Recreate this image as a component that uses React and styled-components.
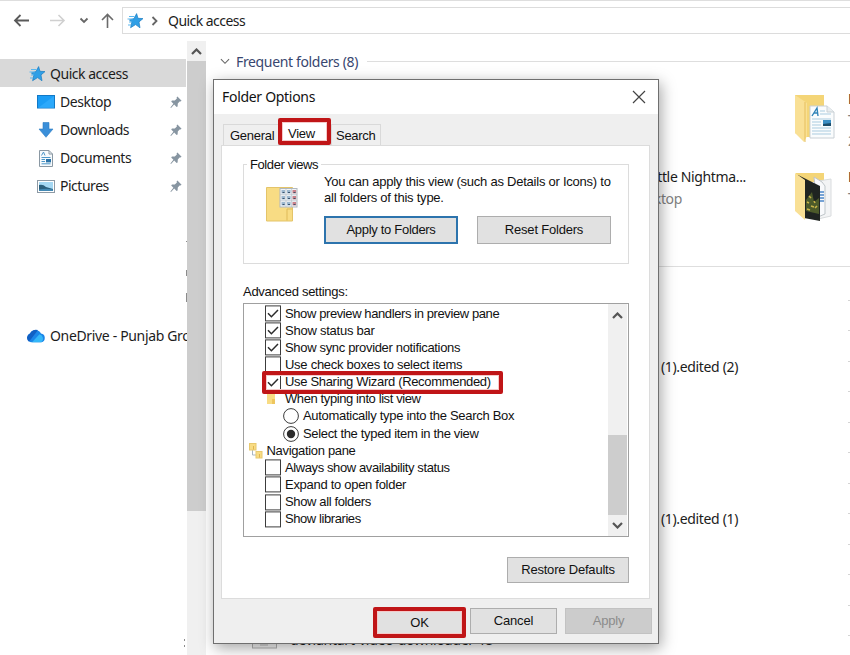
import React from 'react';
import styled, { createGlobalStyle, css } from 'styled-components';

const GlobalStyle = createGlobalStyle`
  * { box-sizing: border-box; }
  body { margin: 0; background: #fff; overflow: hidden; }
  svg { display: block; flex: none; }
`;

const Explorer = styled.div`
  position: relative;
  width: 850px;
  height: 655px;
  overflow: hidden;
  display: flex;
  flex-direction: column;
  background: #fff;
  color: #1c1c1c;
  font: 14px/20px "Noto Sans", "Open Sans", sans-serif;
  letter-spacing: -0.35px;
  white-space: nowrap;
`;

const NavBar = styled.header`
  display: flex;
  height: 41px;
  border-top: 1px solid #dedede;
  padding-top: 6px;
  flex: none;
`;

const NavButtons = styled.div`
  width: 122px;
  height: 27px;
`;

const AddressBar = styled.div`
  flex: 1;
  height: 27px;
  border: 1px solid #dcdcdc;
  border-right: 0;
  display: flex;
  align-items: center;
  padding-left: 4px;
`;

const Crumb = styled.span`
  margin-left: 6px;
  letter-spacing: -0.55px;
`;

const Body = styled.div`
  display: flex;
  flex: 1;
  min-height: 0;
`;

const Sidebar = styled.nav`
  width: 187px;
  padding-top: 18px;
  overflow: hidden;
  flex: none;
  display: flex;
  flex-direction: column;
`;

const SideItem = styled.div`
  display: flex;
  align-items: center;
  flex: none;
  height: 28px;
  width: 186px;
  padding: 2px 4px 0 ${(p) => p.$indent}px;
  background: ${(p) => (p.$active ? '#d9d9d9' : 'transparent')};
  letter-spacing: ${(p) => p.$track ?? -0.48}px;
`;

const SideIcon = styled.span`
  display: flex;
  width: ${(p) => p.$w}px;
  flex: none;
`;

const SideText = styled.span`
  flex: 1;
`;

const SideGap = styled.div`
  height: ${(p) => p.$h}px;
  flex: none;
  display: flex;
  flex-direction: column;
  align-items: flex-end;
`;

const Sliver = styled.i`
  width: 1px;
  height: ${(p) => p.$h}px;
  margin: ${(p) => p.$top}px ${(p) => p.$right || 0}px 0 0;
  background: #8c8c8c;
`;

const Track = styled.div`
  width: 19px;
  flex: none;
  display: flex;
  flex-direction: column;
  background: #f0f0f0;
`;

const ArrowCell = styled.div`
  height: ${(p) => p.$h}px;
  display: flex;
  align-items: center;
  justify-content: center;
`;

const Thumb = styled.div`
  height: ${(p) => p.$h}px;
  margin-top: ${(p) => p.$top || 0}px;
  background: #cdcdcd;
`;

const Content = styled.main`
  flex: 1;
  min-width: 0;
  overflow: hidden;
  padding-left: 14px;
`;

const GroupHeader = styled.div`
  display: flex;
  align-items: center;
  height: 41px;
  color: #38466f;
`;

const HeaderText = styled.span`
  margin: 0 9px 0 6px;
`;

const Rule = styled.div`
  flex: 1;
  height: 1px;
  background: #dedede;
`;

const Tiles = styled.div`
  margin-top: -2px;
`;

const TileRow = styled.div`
  display: flex;
  height: 78px;
  align-items: center;
`;

const TileText = styled.div`
  width: 526px;
  flex: none;
  text-align: right;
  margin: 0 48px 18px 0;
  line-height: 22px;
`;

const Sub = styled.div`
  color: #808080;
  padding-right: ${(p) => p.$pad || 0}px;
`;

const EdgeText = styled.div`
  margin: 0 0 ${(p) => p.$lift}px 11px;
  line-height: 21px;
`;

const OffsetRows = styled.div`
  padding-top: 24px;
`;

const FileRow = styled.div`
  display: flex;
  align-items: center;
  height: 152px;
`;

const FileName = styled.div`
  width: 518px;
  text-align: right;
`;

const RecentRule = styled.div`
  height: 1px;
  background: #dedede;
  margin-top: 30px;
`;

const LastFile = styled.div`
  display: flex;
  align-items: center;
  gap: 13px;
  padding-left: 32px;
  margin-top: 35px;
  height: 20px;
`;

const LastName = styled.span`
  letter-spacing: -0.25px;
`;

const EdgeMarks = styled.div`
  position: absolute;
  right: 0;
  top: 300px;
  width: 2px;
  display: flex;
  flex-direction: column;
  justify-content: space-between;
  height: 336px;
`;

const Mark = styled.i`
  height: 1px;
  background: #d4d4d4;
`;

const Dialog = styled.section`
  position: absolute;
  left: 213px;
  top: 79px;
  width: 446px;
  height: 565px;
  background: #efefef;
  border: 1px solid #6f6f6f;
  box-shadow: 2px 4px 14px rgba(0, 0, 0, 0.36);
  color: #111;
  font: 13px/16px "Liberation Sans", Arial, sans-serif;
  letter-spacing: -0.28px;
`;

const TitleBar = styled.div`
  height: 34px;
  background: #fff;
  display: flex;
  align-items: center;
  justify-content: space-between;
  padding: 0 12px 0 8px;
  font: 14px/20px "Noto Sans", "Open Sans", sans-serif;
  letter-spacing: -0.3px;
`;

const Tabs = styled.div`
  display: flex;
  align-items: flex-end;
  height: 31px;
  padding-left: 9px;
`;

const Tab = styled.div`
  width: ${(p) => p.$w}px;
  height: 21px;
  border: 1px solid #d9d9d9;
  border-bottom: 0;
  padding: 3px 0 0 ${(p) => p.$pad}px;
`;

const redFrame = css`
  border: 4px solid #c01517;
  border-radius: 2px;
  box-shadow: inset 0 0 0 1px #f5c9c9;
`;

const ActiveTab = styled.div`
  ${redFrame}
  width: 53px;
  height: 27px;
  background: #fff;
  padding: 4px 0 0 6px;
  line-height: 15px;
  margin-left: -1px;
  z-index: 1;
`;

const Panel = styled.div`
  margin: 0 8px 0 7px;
  height: 454px;
  background: #fff;
  border: 1px solid #dcdcdc;
  padding: 18px 20px 0 21px;
`;

const Group = styled.fieldset`
  position: relative;
  margin: 0;
  height: 100px;
  border: 1px solid #dcdcdc;
  padding: 0 0 0 22px;
  display: flex;
`;

const Legend = styled.span`
  position: absolute;
  left: 3px;
  top: -8px;
  background: #fff;
  padding: 0 3px;
  letter-spacing: -0.4px;
`;

const GroupIcon = styled.div`
  width: 58px;
  padding-top: 21px;
`;

const GroupBody = styled.div`
  padding-top: 9px;
`;

const Copy = styled.p`
  margin: 0 0 11px;
  line-height: 15.5px;
  letter-spacing: -0.24px;
`;

const Buttons = styled.div`
  display: flex;
  gap: ${(p) => p.$gap}px;
`;

const Button = styled.button`
  width: ${(p) => p.$w}px;
  height: ${(p) => p.$h}px;
  padding: 0;
  font: inherit;
  letter-spacing: ${(p) => p.$track ?? -0.2}px;
  color: #111;
  background: #e1e1e1;
  border: 1px solid #adadad;
  ${(p) => p.$focus && css`border: 2px solid #2d74ad;`}
  ${(p) => p.disabled && css`background: #cccccc; border-color: #c2c2c2; color: #8b8b8b;`}
  ${(p) => p.$marked && redFrame}
`;

const Caption = styled.div`
  margin: 20px 0 3px;
  line-height: 16px;
`;

const ListBox = styled.div`
  display: flex;
  justify-content: space-between;
  height: 234px;
  border: 1px solid #a0a0a0;
  padding-right: 1px;
`;

const Tree = styled.div`
  padding-top: 1px;
`;

const Row = styled.div`
  position: relative;
  display: flex;
  align-items: center;
  height: 17.15px;
  padding-left: ${(p) => p.$indent}px;
  letter-spacing: ${(p) => p.$track}px;
`;

const RowMark = styled.div`
  position: absolute;
  left: 18px;
  top: -2.6px;
  width: 241px;
  height: 23px;
  z-index: 1;
  ${redFrame}
`;

const RowIcon = styled.span`
  width: ${(p) => p.$w}px;
  flex: none;
`;

const PanelFoot = styled.div`
  display: flex;
  justify-content: flex-end;
  padding-top: 20px;
`;

const Footer = styled.footer`
  display: flex;
  justify-content: flex-end;
  padding: 9px 6px 0 0;
`;

const OkSlot = styled.div`
  margin: -1px 4px 0 0;
`;

const ApplySlot = styled.div`
  margin-left: 8px;
`;

const Star = () => (
  <svg width="17" height="16" viewBox="0 0 17 16">
    <path d="M9.6 0.6 L11 5.3 L16 5.6 L12 8.9 L13 14.8 L8.6 11.6 L3.6 14.7 L4.8 9.2 L2.4 7 L7 5.6Z" fill="#2f9fe6" stroke="#1b7dc2" strokeWidth=".7" />
    <path d="M2 3.500H7.500M0.500 6H6M2 9H5M1 12H4" stroke="#5ab7ef" strokeWidth="1" />
  </svg>
);

const Chevron = ({ dir, w = 11, h = 7, color = '#555', sw = 2.2 }) => (
  <svg width={w} height={h} viewBox="0 0 11 7">
    <path d={dir === 'up' ? 'M1 6 L5.5 1.5 L10 6' : 'M1 1 L5.5 5.5 L10 1'} fill="none" stroke={color} strokeWidth={sw} />
  </svg>
);

const Pin = () => (
  <svg width="12" height="13" viewBox="0 0 12 13">
    <path d="M7.4 0.6 L11.6 4.8 L10.4 5.6 L9.6 5.4 L7.8 7.6 L7.6 10.4 L6.6 11 L4.2 8.4 L1 12 L0.4 11.4 L3.4 7.8 L1.2 5.4 L2 4.6 L4.8 4.5 L6.9 2.5 L6.6 1.5Z" fill="#8795a1" />
  </svg>
);

const DesktopIcon = () => (
  <svg width="18" height="14" viewBox="0 0 18 14">
    <rect x=".5" y=".5" width="17" height="12.5" fill="#1b9df5" stroke="#1279c6" />
    <path d="M1 13 L17 1 V13Z" fill="#38b0ff" opacity=".6" />
  </svg>
);

const DownloadIcon = () => (
  <svg width="18" height="16" viewBox="0 0 18 16">
    <path d="M6 .5H12V7H16L9 15.3L2 7H6Z" fill="#3a8fd9" stroke="#2d7cc2" strokeWidth=".6" />
  </svg>
);

const DocIcon = () => (
  <svg width="18" height="17" viewBox="0 0 18 17">
    <path d="M2.5 .5H12L15.5 4V16.5H2.5Z" fill="#f7fafc" stroke="#8a98a3" />
    <path d="M12 .5V4H15.5" fill="none" stroke="#8a98a3" />
    <path d="M4.5 5.5L6.5 2L8 5.5M4.5 7.5H13.5M4.5 9.5H8M4.5 11.5H8M4.5 13.8H13.5" stroke="#4d97c9" fill="none" />
    <rect x="9" y="9" width="5" height="3.4" fill="#2a73a8" />
  </svg>
);

const PictureIcon = () => (
  <svg width="18" height="13" viewBox="0 0 18 13">
    <rect x=".5" y=".5" width="17" height="12" fill="#fff" stroke="#8d9aa5" />
    <rect x="2" y="2" width="14" height="9" fill="#a5d8f3" />
    <path d="M2 5 Q6 4 9 7 L16 9 V11 H2Z" fill="#2b5f7c" />
    <path d="M2 9.5 Q9 8 16 9.5V11H2Z" fill="#4389b4" />
  </svg>
);

const CloudIcon = () => (
  <svg width="20" height="14" viewBox="0 0 20 14">
    <path d="M5 13.2A4.6 4.6 0 0 1 4 4.6A6.2 6.2 0 0 1 15 4.4A4.5 4.5 0 0 1 15.4 13.2Z" fill="#1b86e8" />
    <path d="M4 4.6A6.2 6.2 0 0 1 12 1.1L3 12.7A4.6 4.6 0 0 1 4 4.6Z" fill="#1160c4" />
    <path d="M6 13.2L13.5 5.3A4.5 4.5 0 0 1 15.4 13.2Z" fill="#35b7f8" />
  </svg>
);

const DocFolder = () => (
  <svg width="43" height="50" viewBox="0 0 43 50">
    <path d="M1 1H30V43H9L1 39Z" fill="#f4d577" />
    <path d="M1 1L13 9V42L10 48L1 39Z" fill="#f9e095" />
    <path d="M11 8V48" stroke="#e6bf5c" />
    <path d="M16 12H33L40 18V44H16Z" fill="#fafcfd" stroke="#c9d0d5" />
    <path d="M33 12V18H40" fill="#e8edf0" stroke="#c9d0d5" />
    <path d="M18 22L23 14L24 22M20 19H24" fill="none" stroke="#2f83b8" strokeWidth="1.4" />
    <path d="M26 17H31M26 20H37M18 25H37M18 28H27M18 31H27M18 34H37M18 37H37M18 40H37" stroke="#a9cbdf" />
    <rect x="29" y="26" width="8" height="6" fill="#3d8fc4" />
    <path d="M29 30L37 29V32H29Z" fill="#1d4e6c" />
  </svg>
);

const PhotoFolder = () => (
  <svg width="43" height="50" viewBox="0 0 43 50">
    <path d="M2 1H30V10H2Z" fill="#f4d577" />
    <path d="M24 9L37 7V44L24 47Z" fill="#f3f4f5" stroke="#d9dcde" />
    <path d="M20 5L28 10L31 14V42L24 45Z" fill="#f8f9fb" stroke="#bfc5c9" />
    <path d="M26 20H30M26 23H30M26 26H30M26 29H30" stroke="#4b86c9" strokeWidth="1.6" />
    <path d="M4 3L26 14V49L10 46Z" fill="#1f2421" />
    <path d="M12 28L18 20L20 30L25 26V42L12 39Z" fill="#4c5a2a" />
    <path d="M13 30l2 1M17 34l3 1M15 24l2 2M21 36l2 -2M13 37l3 1M20 29l1 2" stroke="#c9b348" strokeWidth="1.6" />
    <path d="M1 1L11 8V48L1 39Z" fill="#f9e095" />
  </svg>
);

const ViewFolder = () => (
  <svg width="32" height="36" viewBox="0 0 32 36">
    <path d="M.5 1.5H26.5V35H.5Z" fill="#f8dc84" stroke="#e4c469" />
    <path d="M21 23V34.5M21 23H26.5" stroke="#dfba58" fill="none" />
    <rect x="14" y="2.5" width="17" height="18.5" fill="#f2f5f8" stroke="#b0b8bf" />
    {[4, 10, 16].map((y) => [15.5, 21, 26.5].map((x, i) => (
      <g key={`${x}-${y}`}>
        <rect x={x} y={y} width="3.6" height="3.4" fill={i === 2 ? '#c9808a' : '#9db8cf'} />
        <path d={`M${x + 1} ${y + 2.5}h2`} stroke="#3d556e" />
      </g>
    )))}
    <path d="M14 8.7H31M14 14.8H31M20 3V21M25.6 3V21" stroke="#b9c2ca" strokeWidth=".7" />
  </svg>
);

const Check = ({ on }) => (
  <svg width="16" height="17" viewBox="0 0 16 17">
    <rect x=".5" y=".9" width="15" height="15" fill="#fff" stroke="#3c3c3c" />
    {on && <path d="M3 8.3L6.4 11.7L13 5" fill="none" stroke="#2b2b2b" strokeWidth="1.5" />}
  </svg>
);

const Radio = ({ on }) => (
  <svg width="16" height="16" viewBox="0 0 16 16">
    <circle cx="8" cy="8" r="7.4" fill="#fff" stroke="#3c3c3c" />
    {on && <circle cx="8" cy="8" r="4.2" fill="#2b2b2b" />}
  </svg>
);

const MiniFolder = () => (
  <svg width="12" height="14" viewBox="0 0 12 14">
    <path d="M2 0H10V12H2Z" fill="#f8dc84" />
    <path d="M7 7V12H10V7Z" fill="#eec65f" />
  </svg>
);

const TreeFolders = () => (
  <svg width="14" height="16" viewBox="0 0 14 16">
    <path d="M3.5 7V12H7" fill="none" stroke="#a9b7c2" />
    <rect x=".5" y=".5" width="6.5" height="6.5" fill="#f8dc84" stroke="#e8c96f" />
    <rect x="7" y="8.5" width="6" height="6.5" fill="#f8dc84" stroke="#e8c96f" />
    <path d="M4.5 3V6.5M10.5 11V14.5" stroke="#e0b550" />
  </svg>
);

const rows = [
  { kind: 'check', on: true, text: 'Show preview handlers in preview pane', track: -0.4 },
  { kind: 'check', on: true, text: 'Show status bar', track: -0.24 },
  { kind: 'check', on: true, text: 'Show sync provider notifications', track: -0.33 },
  { kind: 'check', text: 'Use check boxes to select items', track: -0.27 },
  { kind: 'check', on: true, text: 'Use Sharing Wizard (Recommended)', marked: true, track: -0.32 },
  { kind: 'folder', text: 'When typing into list view', track: -0.4 },
  { kind: 'radio', text: 'Automatically type into the Search Box', track: -0.3 },
  { kind: 'radio', on: true, text: 'Select the typed item in the view', track: -0.33 },
  { kind: 'tree', text: 'Navigation pane', track: -0.33 },
  { kind: 'check', text: 'Always show availability status', track: -0.4 },
  { kind: 'check', text: 'Expand to open folder', track: -0.29 },
  { kind: 'check', text: 'Show all folders', track: -0.37 },
  { kind: 'check', text: 'Show libraries', track: -0.42 },
];

const kinds = {
  check: { indent: 21, w: 20, Icon: Check },
  folder: { indent: 21, w: 20, Icon: MiniFolder },
  radio: { indent: 39, w: 20, Icon: Radio },
  tree: { indent: 5, w: 17.5, Icon: TreeFolders },
};

const SettingRow = ({ kind, on, text, marked, track }) => {
  const { indent, w, Icon } = kinds[kind];
  return (
    <Row $indent={indent} $track={track}>
      <RowIcon $w={w}><Icon on={on} /></RowIcon>
      {text}
      {marked && <RowMark />}
    </Row>
  );
};

const places = [
  { text: 'Desktop', Icon: DesktopIcon },
  { text: 'Downloads', Icon: DownloadIcon },
  { text: 'Documents', Icon: DocIcon },
  { text: 'Pictures', Icon: PictureIcon },
];

const FolderOptions = () => (
  <Dialog>
    <TitleBar>
      Folder Options
      <svg width="14" height="14" viewBox="0 0 14 14">
        <path d="M1 1L13 13M13 1L1 13" stroke="#444" strokeWidth="1.2" />
      </svg>
    </TitleBar>
    <Tabs>
      <Tab $w={56} $pad={6}>General</Tab>
      <ActiveTab>View</ActiveTab>
      <Tab $w={50} $pad={4}>Search</Tab>
    </Tabs>
    <Panel>
      <Group>
        <Legend>Folder views</Legend>
        <GroupIcon><ViewFolder /></GroupIcon>
        <GroupBody>
          <Copy>You can apply this view (such as Details or Icons) to<br />all folders of this type.</Copy>
          <Buttons $gap={19}>
            <Button $w={134} $h={28} $track={-0.3} $focus>Apply to Folders</Button>
            <Button $w={134} $h={28}>Reset Folders</Button>
          </Buttons>
        </GroupBody>
      </Group>
      <Caption>Advanced settings:</Caption>
      <ListBox>
        <Tree>{rows.map((r) => <SettingRow key={r.text} {...r} />)}</Tree>
        <Track>
          <ArrowCell $h={22}><Chevron dir="up" /></ArrowCell>
          <Thumb $h={80} $top={109} />
          <ArrowCell $h={20}><Chevron dir="down" /></ArrowCell>
        </Track>
      </ListBox>
      <PanelFoot><Button $w={122} $h={26}>Restore Defaults</Button></PanelFoot>
    </Panel>
    <Footer>
      <Buttons $gap={0}>
        <OkSlot><Button $w={93} $h={31} $marked>OK</Button></OkSlot>
        <Button $w={87} $h={26}>Cancel</Button>
        <ApplySlot><Button $w={87} $h={26} disabled>Apply</Button></ApplySlot>
      </Buttons>
    </Footer>
  </Dialog>
);

export default function App() {
  return (
    <>
      <GlobalStyle />
      <Explorer>
        <NavBar>
          <NavButtons>
            <svg width="122" height="27" viewBox="0 0 122 27" fill="none">
              <path d="M29 13.5H15M20.5 8L15 13.5L20.5 19" stroke="#5a5a5a" strokeWidth="1.8" />
              <path d="M50 13.5H64M58.5 8L64 13.5L58.5 19" stroke="#d0d0d0" strokeWidth="1.6" />
              <path d="M80.5 11.5L84 15L87.5 11.5" stroke="#666" strokeWidth="1.8" />
              <path d="M107.5 21V7.5M102 13L107.5 7.5L113 13" stroke="#6a6a6a" strokeWidth="1.6" />
            </svg>
          </NavButtons>
          <AddressBar>
            <Star />
            <svg width="18" height="12" viewBox="0 0 18 12">
              <path d="M8.5 2L12.5 6L8.5 10" fill="none" stroke="#666" strokeWidth="1.8" />
            </svg>
            <Crumb>Quick access</Crumb>
          </AddressBar>
        </NavBar>
        <Body>
          <Sidebar>
            <SideItem $indent={29} $active>
              <SideIcon $w={21}><Star /></SideIcon>
              <SideText>Quick access</SideText>
            </SideItem>
            {places.map(({ text, Icon }) => (
              <SideItem key={text} $indent={37}>
                <SideIcon $w={23}><Icon /></SideIcon>
                <SideText>{text}</SideText>
                <Pin />
              </SideItem>
            ))}
            <SideGap $h={122}>
              <Sliver $h={1} $top={42} />
              <Sliver $h={6} $top={28} />
              <Sliver $h={9} $top={17} />
            </SideGap>
            <SideItem $indent={26} $track={-0.34}>
              <SideIcon $w={24}><CloudIcon /></SideIcon>
              <SideText>OneDrive - Punjab Gro</SideText>
            </SideItem>
            <SideGap $h={300}>
              <Sliver $h={2} $top={290} $right={2} />
              <Sliver $h={2} $top={4} $right={2} />
            </SideGap>
          </Sidebar>
          <Track>
            <ArrowCell $h={20}><Chevron dir="up" /></ArrowCell>
            <Thumb $h={450} />
          </Track>
          <Content>
            <GroupHeader>
              <Chevron w={10} h={7} color="#666" sw={1.2} />
              <HeaderText>Frequent folders (8)</HeaderText>
              <Rule />
            </GroupHeader>
            <Tiles>
              <TileRow>
                <TileText />
                <DocFolder />
                <EdgeText $lift={0}>D<Sub>T</Sub><Sub>2</Sub></EdgeText>
              </TileRow>
              <TileRow>
                <TileText>Little Nightma...<Sub $pad={64}>Desktop</Sub></TileText>
                <PhotoFolder />
                <EdgeText $lift={20}>F<Sub>T</Sub></EdgeText>
              </TileRow>
            </Tiles>
            <RecentRule />
            <OffsetRows>
              <FileRow><FileName>(1).edited (2)</FileName></FileRow>
              <FileRow><FileName>(1).edited (1)</FileName></FileRow>
            </OffsetRows>
            <LastFile>
              <svg width="25" height="20" viewBox="0 0 25 20">
                <rect x=".5" y="-10" width="24" height="28" fill="#f6f6f6" stroke="#b5b5b5" />
                <path d="M8 15H16" stroke="#bbb" />
              </svg>
              <LastName>deviantart-video-downloader-15</LastName>
            </LastFile>
          </Content>
        </Body>
        <EdgeMarks>{Array.from({ length: 12 }, (_, i) => <Mark key={i} />)}</EdgeMarks>
        <FolderOptions />
      </Explorer>
    </>
  );
}
